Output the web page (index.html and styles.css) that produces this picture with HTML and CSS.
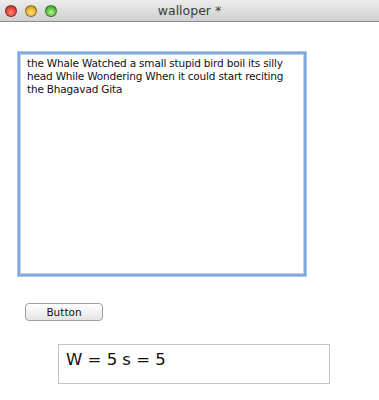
FILE: index.html
```html
<!DOCTYPE html>
<html>
<head>
<meta charset="utf-8">
<link rel="stylesheet" href="styles.css">
</head>
<body>
<div class="window">
  <div class="titlebar">
    <div class="lights">
      <span class="light red"></span>
      <span class="light yellow"></span>
      <span class="light green"></span>
    </div>
    <div class="title">walloper *</div>
  </div>
  <div class="content">
    <div class="textarea">the Whale Watched a small stupid bird boil its silly head While Wondering When it could start reciting the Bhagavad Gita</div>
    <div class="button-row"><button class="button">Button</button></div>
    <div class="label-box">W = 5 s = 5</div>
  </div>
</div>
</body>
</html>
```
FILE: styles.css
```css
html, body {
  margin: 0;
  padding: 0;
  background: #ffffff;
}
.window {
  width: 379px;
  height: 400px;
  overflow: hidden;
  font-family: "DejaVu Sans", "Liberation Sans", sans-serif;
  color: #1a1a1a;
}
.titlebar {
  position: relative;
  height: 21px;
  border-bottom: 1px solid #8c8c8c;
  background: linear-gradient(#ececec, #d0d0d0);
  display: flex;
  align-items: center;
}
.lights {
  display: flex;
  gap: 8px;
  padding-left: 5px;
}
.light {
  width: 12px;
  height: 12px;
  border-radius: 50%;
  box-sizing: border-box;
  border: 1px solid rgba(0,0,0,0.35);
}
.red { background: radial-gradient(circle at 50% 65%, #ff8a80 0%, #e5443a 55%, #a8231c 100%); }
.yellow { background: radial-gradient(circle at 50% 65%, #ffe08a 0%, #e8b22c 55%, #a57414 100%); }
.green { background: radial-gradient(circle at 50% 65%, #b8f29a 0%, #5ec23e 55%, #2d7a1c 100%); }
.title {
  position: absolute;
  left: 0;
  right: 0;
  top: 0;
  height: 21px;
  line-height: 21px;
  text-align: center;
  font-size: 12.5px;
  color: #3a3a3a;
}
.content {
  padding-top: 29px;
}
.textarea {
  margin-left: 17px;
  width: 290px;
  height: 226px;
  box-sizing: border-box;
  border: 1px solid #a9c4ea;
  box-shadow: inset 0 0 0 2px #82a9df, inset 0 0 0 3px #c9cfd8;
  background: #fff;
  padding: 5px 9px;
  font-size: 10.5px;
  letter-spacing: -0.18px;
  line-height: 13px;
  color: #111;
}
.button-row {
  padding-top: 26px;
  padding-left: 25px;
}
.button {
  display: block;
  width: 78px;
  height: 18px;
  box-sizing: border-box;
  border: 1px solid #a0a0a0;
  border-radius: 4px;
  background: linear-gradient(#ffffff, #f2f2f2 50%, #e3e3e3);
  font-family: "DejaVu Sans", "Liberation Sans", sans-serif;
  font-size: 10.5px;
  color: #111;
  padding: 0;
  line-height: 16px;
}
.label-box {
  margin-top: 23px;
  margin-left: 58px;
  width: 272px;
  height: 40px;
  box-sizing: border-box;
  border: 1px solid #c4c4c4;
  background: #fff;
  font-size: 16.5px;
  padding: 5px 0 0 7px;
  line-height: 20px;
  color: #111;
}
```
